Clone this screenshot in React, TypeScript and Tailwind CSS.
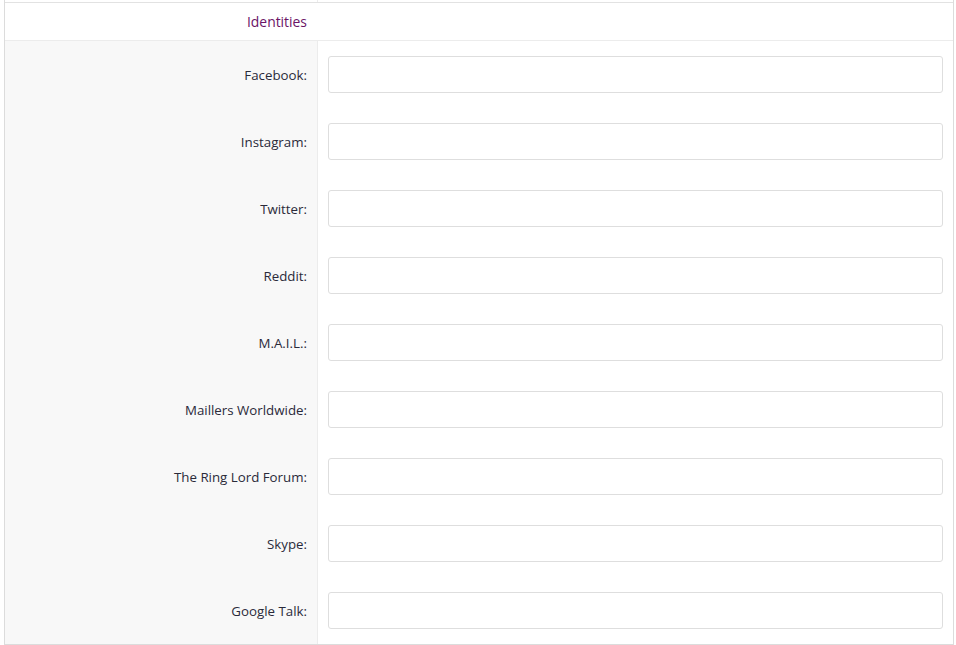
import React from "react";

const labels = [
  "Facebook:",
  "Instagram:",
  "Twitter:",
  "Reddit:",
  "M.A.I.L.:",
  "Maillers Worldwide:",
  "The Ring Lord Forum:",
  "Skype:",
  "Google Talk:",
];

export default function App() {
  return (
    <div className="w-[956px] h-[645px] bg-white" style={{ fontFamily: '"Open Sans", "Noto Sans", sans-serif' }}>
      <div className="ml-[4px] w-[950px] border-l border-r border-b border-[#dcdcdc]">
        <div className="flex h-[3px] border-b border-[#e2e2e2]">
          <div className="w-[313px] border-r border-[#ececec]" />
          <div className="flex-1" />
        </div>
        <div className="flex h-[38px] border-b border-[#ececec] items-center">
          <div className="w-[313px] pr-[11px] pt-[1px] text-right text-[13.9px] text-[#6b1466]">Identities</div>
        </div>
        {labels.map((l) => (
          <div key={l} className="flex h-[67px]">
            <div className="w-[313px] bg-[#f8f8f8] border-r border-[#ececec] flex items-center justify-end pr-[10px] pt-[3px] text-[13.3px] text-[#2a2a3a]">
              {l}
            </div>
            <div className="flex-1 flex items-center pl-[10px] pr-[10px]">
              <input className="w-full h-[37px] rounded-[3px] border border-[#dedede] bg-white outline-none" />
            </div>
          </div>
        ))}
      </div>
    </div>
  );
}
